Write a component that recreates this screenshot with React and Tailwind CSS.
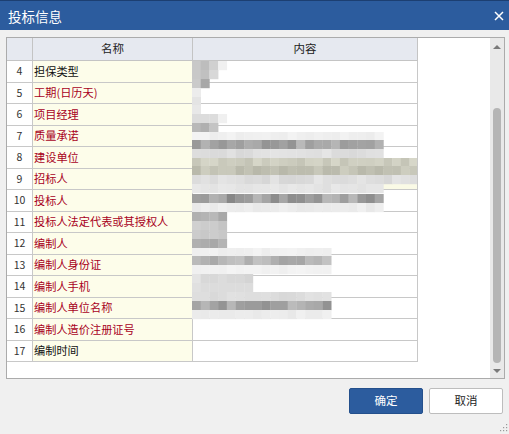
import React from "react";

const rows = [
  { n: 4, name: "担保类型", red: false },
  { n: 5, name: "工期(日历天)", red: true },
  { n: 6, name: "项目经理", red: true },
  { n: 7, name: "质量承诺", red: true },
  { n: 8, name: "建设单位", red: true },
  { n: 9, name: "招标人", red: true, hl: true },
  { n: 10, name: "投标人", red: true },
  { n: 11, name: "投标人法定代表或其授权人", red: true },
  { n: 12, name: "编制人", red: true },
  { n: 13, name: "编制人身份证", red: true },
  { n: 14, name: "编制人手机", red: true },
  { n: 15, name: "编制人单位名称", red: true },
  { n: 16, name: "编制人造价注册证号", red: true },
  { n: 17, name: "编制时间", red: false },
];

function rng(seed) {
  let s = seed;
  return () => {
    s = (s * 9301 + 49297) % 233280;
    return s / 233280;
  };
}

const bands = [
  [61, ["#c8c8c8", "#bdbdbd", "#d0d0d0", "#f0f0f0"]],
  [70, ["#c8c8c8", "#c0c0c0", "#d8d8d8"]],
  [79, ["#cacaca", "#a8a8a8"]],
  [88, ["#ececec"]],
  [97, ["#e4e4e4"]],
  [105, ["#e8e8e8"]],
  [114, ["#dcdcdc", "#dcdcdc", "#dcdcdc", "#f0f0f0"]],
  [123, ["#b8b8b8", "#b0b0b0", "#c4c4c4"]],
  [132, { count: 22, base: 240, spread: 8 }],
  [140, { count: 22, base: 165, spread: 40 }],
  [149, { count: 22, base: 222, spread: 14 }],
  [158, { count: 26, base: 205, spread: 20, tint: true }],
  [166, { count: 26, base: 195, spread: 22, tint: true }],
  [175, { count: 26, base: 222, spread: 16 }],
  [184, { count: 22, base: 228, spread: 10 }],
  [194, { count: 22, base: 160, spread: 50 }],
  [203, { count: 22, base: 236, spread: 8 }],
  [212, ["#b0b0b0", "#b4b4b4", "#b8b8b8", "#a8a8a8"]],
  [221, ["#d0d0d0", "#cccccc", "#cccccc", "#c4c4c4"]],
  [230, ["#cccccc", "#c8c8c8", "#cccccc", "#c8c8c8"]],
  [239, ["#b0b0b0", "#acacac", "#a8a8a8", "#b4b4b4"]],
  [248, { count: 16, base: 240, spread: 6 }],
  [256, { count: 16, base: 180, spread: 34 }],
  [265, { count: 16, base: 242, spread: 6 }],
  [274, ["#e4e4e4", "#d8d8d8", "#d8d8d8", "#dcdcdc", "#d8d8d8", "#d8d8d8", "#d4d4d4"]],
  [283, ["#e0e0e0", "#dcdcdc", "#dcdcdc", "#dcdcdc", "#dcdcdc", "#dcdcdc", "#dcdcdc"]],
  [292, { count: 16, base: 222, spread: 12 }],
  [301, { count: 16, base: 168, spread: 44 }],
  [310, { count: 16, base: 236, spread: 8 }],
];

function mosaicRects() {
  const r = rng(17);
  const out = [];
  const bw = 8.7;
  bands.forEach(([y, spec], bi) => {
    let colors;
    if (Array.isArray(spec)) colors = spec;
    else {
      colors = [];
      for (let i = 0; i < spec.count; i++) {
        const v = Math.round(spec.base + (r() - 0.5) * spec.spread);
        const c = Math.max(0, Math.min(255, v));
        colors.push(
          spec.tint
            ? `rgb(${c},${c},${Math.max(0, c - 14)})`
            : `rgb(${c},${c},${c})`
        );
      }
    }
    colors.forEach((c, i) => {
      out.push(
        <rect
          key={bi + "-" + i}
          x={i * bw}
          y={y - 60}
          width={bw + 0.3}
          height={9.2}
          fill={c}
        />
      );
    });
  });
  return out;
}

export default function App() {
  return (
    <div
      className="relative w-[509px] h-[434px] bg-[#f0f0f0] flex flex-col overflow-hidden"
      style={{ fontFamily: '"Noto Sans CJK SC", "Noto Sans", sans-serif' }}
    >
      {/* Title bar */}
      <div className="h-[30px] bg-[#2c5c9e] border-t border-[#1c3f72] flex items-center justify-between pl-[8px] pr-[5px]">
        <span className="text-white text-[13.5px] leading-none mt-[2px]">投标信息</span>
        <svg width="10" height="10" viewBox="0 0 10 10" className="mt-[1px]">
          <path d="M1 1 L9 9 M9 1 L1 9" stroke="#ffffff" strokeWidth="1.5" />
        </svg>
      </div>

      {/* Table area */}
      <div className="pl-[6px] pt-[7px]">
        <div className="w-[499px] h-[342px] border border-[#ababab] bg-white flex">
          <div className="w-[411px] flex flex-col">
            <div className="h-[23px] flex bg-[#e6e9f0] border-b border-[#c4c4c4] text-[11.5px] text-[#222]">
              <div className="w-[26px] border-r border-[#c4c4c4]" />
              <div className="w-[160px] border-r border-[#c4c4c4] flex items-center justify-center">名称</div>
              <div className="w-[225px] border-r border-[#c4c4c4] flex items-center justify-center">内容</div>
            </div>
            {rows.map((r) => (
              <div key={r.n} className="h-[21.5px] flex border-b border-[#c8c8c8]">
                <div className="w-[26px] border-r border-[#c8c8c8] flex items-center justify-center text-[10.5px] text-[#333]">
                  {r.n}
                </div>
                <div
                  className={
                    "w-[160px] border-r border-[#c8c8c8] bg-[#fdfdea] flex items-center pl-[1px] text-[11.2px] whitespace-nowrap " +
                    (r.red ? "text-[#a8001c]" : "text-[#111]")
                  }
                >
                  {r.name}
                </div>
                <div
                  className={
                    "w-[225px] border-r border-[#c8c8c8] " +
                    (r.hl ? "bg-[#fafae6]" : "bg-white")
                  }
                />
              </div>
            ))}
          </div>
          <div className="flex-1 bg-white" />
          {/* Scrollbar */}
          <div className="w-[14px] bg-[#e9e9e9] flex flex-col items-center pt-[6px] pb-[4px]">
            <svg width="8" height="5" viewBox="0 0 8 5">
              <path d="M0 5 L4 1 L8 5 Z" fill="#7a7a7a" />
            </svg>
            <div className="h-[59px]" />
            <div className="w-[8px] h-[255px] rounded-full bg-[#b5b5b5]" />
            <div className="flex-1" />
            <svg width="8" height="5" viewBox="0 0 8 5">
              <path d="M0 0 L8 0 L4 4 Z" fill="#7a7a7a" />
            </svg>
          </div>
        </div>
      </div>

      {/* Buttons */}
      <div className="flex justify-end gap-[6px] pr-[6px] mt-[9px]">
        <button className="w-[74px] h-[26px] rounded-[2px] bg-[#2c5c9e] border border-[#24508c] text-white text-[11.5px]">
          确定
        </button>
        <button className="w-[74px] h-[26px] rounded-[2px] bg-white border border-[#bdbdbd] text-[#222] text-[11.5px]">
          取消
        </button>
      </div>

      {/* Resize grip */}
      <svg className="absolute right-[1px] bottom-[2px]" width="8" height="8" viewBox="0 0 8 8">
        <rect x="6" y="0" width="1.2" height="1.2" fill="#9a9a9a" />
        <rect x="3" y="3" width="1.2" height="1.2" fill="#9a9a9a" />
        <rect x="6" y="3" width="1.2" height="1.2" fill="#9a9a9a" />
        <rect x="0" y="6" width="1.2" height="1.2" fill="#9a9a9a" />
        <rect x="3" y="6" width="1.2" height="1.2" fill="#9a9a9a" />
        <rect x="6" y="6" width="1.2" height="1.2" fill="#9a9a9a" />
      </svg>

      {/* Pixelated (redacted) content overlay */}
      <svg
        className="absolute left-[192px] top-[60px] pointer-events-none"
        width="225"
        height="262"
        viewBox="0 0 225 262"
      >
        {mosaicRects()}
      </svg>
    </div>
  );
}
